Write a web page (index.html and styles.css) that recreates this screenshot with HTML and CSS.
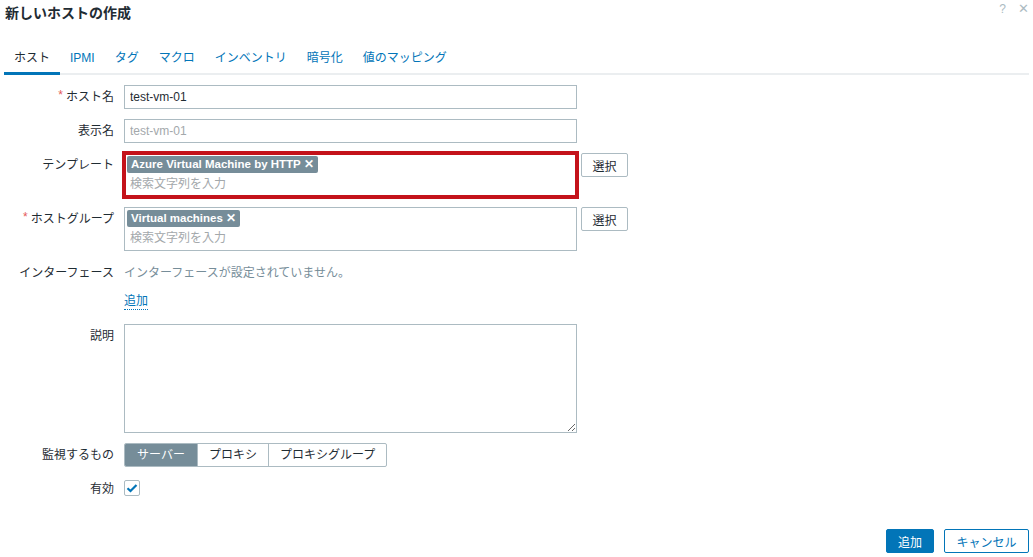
FILE: index.html
```html
<!DOCTYPE html>
<html lang="ja">
<head>
    <meta charset="UTF-8">
    <title>新しいホストの作成</title>
    <link rel="stylesheet" href="styles.css">
</head>
<body>
    <div class="dialog">
        <div class="dialog-head">
            <h4>新しいホストの作成</h4>
            <div class="head-controls">
                <span class="help">?</span>
                <span class="close">✕</span>
            </div>
        </div>

        <ul class="tabs">
            <li class="active">ホスト</li>
            <li>IPMI</li>
            <li>タグ</li>
            <li>マクロ</li>
            <li>インベントリ</li>
            <li>暗号化</li>
            <li>値のマッピング</li>
        </ul>

        <div class="form">
            <div class="row">
                <label class="required">ホスト名</label>
                <div class="field"><input type="text" class="text-input" value="test-vm-01"></div>
            </div>
            <div class="row">
                <label>表示名</label>
                <div class="field"><input type="text" class="text-input" placeholder="test-vm-01"></div>
            </div>
            <div class="row">
                <label>テンプレート</label>
                <div class="field">
                    <div class="multiselect highlighted">
                        <span class="tag">Azure Virtual Machine by HTTP <b>✕</b></span>
                        <span class="placeholder">検索文字列を入力</span>
                    </div>
                    <button type="button" class="btn-alt">選択</button>
                </div>
            </div>
            <div class="row">
                <label class="required">ホストグループ</label>
                <div class="field">
                    <div class="multiselect">
                        <span class="tag">Virtual machines <b>✕</b></span>
                        <span class="placeholder">検索文字列を入力</span>
                    </div>
                    <button type="button" class="btn-alt">選択</button>
                </div>
            </div>
            <div class="row row-text">
                <label>インターフェース</label>
                <div class="field muted">インターフェースが設定されていません。</div>
            </div>
            <div class="row row-link">
                <label></label>
                <div class="field"><a href="#" class="link">追加</a></div>
            </div>
            <div class="row">
                <label>説明</label>
                <div class="field"><textarea class="textarea"></textarea></div>
            </div>
            <div class="row">
                <label>監視するもの</label>
                <div class="field">
                    <div class="segmented">
                        <span class="on">サーバー</span>
                        <span>プロキシ</span>
                        <span>プロキシグループ</span>
                    </div>
                </div>
            </div>
            <div class="row">
                <label>有効</label>
                <div class="field">
                    <span class="checkbox">
                        <svg width="12" height="10" viewBox="0 0 12 10"><path d="M1.5 5.2 L4.5 8 L10.5 2" fill="none" stroke="#0275b8" stroke-width="2.2"/></svg>
                    </span>
                </div>
            </div>
        </div>

        <div class="dialog-foot">
            <button type="button" class="btn-main">追加</button>
            <button type="button" class="btn-cancel">キャンセル</button>
        </div>
    </div>
</body>
</html>
```

FILE: styles.css
```css
*{
    margin: 0;
    padding: 0;
    box-sizing: border-box;
}
body{
    background-color: #fff;
    color: #1f2c33;
    font-family: "Liberation Sans", Arial, "Noto Sans CJK JP", sans-serif;
    font-size: 12px;
}

.dialog{
    width: 1033px;
    height: 557px;
    position: relative;
}

.dialog-head{
    display: flex;
    justify-content: space-between;
    padding: 4px 4px 0 5px;
    height: 44px;
}
.dialog-head h4{
    font-size: 14px;
    font-weight: bold;
    line-height: 18px;
    color: #1f2c33;
}
.head-controls{
    display: flex;
    gap: 12px;
    color: #acbbc2;
    font-size: 12px;
    line-height: 12px;
    margin-top: -1px;
}
.head-controls .close{
    font-size: 13px;
}

.tabs{
    list-style: none;
    display: flex;
    margin: 0 0 0 4px;
    border-bottom: 2px solid #ebeef0;
    height: 31px;
    width: 1025px;
}
.tabs li{
    padding: 7px 10px 0;
    color: #0275b8;
    line-height: 14px;
    cursor: pointer;
}
.tabs li.active{
    color: #1f2c33;
    border-bottom: 3px solid #0275b8;
    margin-bottom: -2px;
}

.form{
    padding-top: 10px;
    display: flex;
    flex-direction: column;
    gap: 10px;
}
.row{
    display: flex;
    gap: 10px;
}
.row label{
    width: 114px;
    height: 24px;
    text-align: right;
    line-height: 22px;
    padding-top: 1px;
    flex-shrink: 0;
    white-space: nowrap;
}
.row label.required::before{
    content: "*";
    color: #e45959;
    margin-right: 3px;
    vertical-align: top;
    line-height: 18px;
}
.field{
    display: flex;
    align-items: flex-start;
    gap: 4px;
}
.text-input{
    width: 453px;
    height: 24px;
    border: 1px solid #acbbc2;
    padding: 0 5px;
    font: inherit;
    color: #1f2c33;
    outline: none;
}
.text-input::placeholder{
    color: #a3a8ab;
}

.multiselect{
    width: 453px;
    height: 44px;
    border: 1px solid #acbbc2;
    padding: 2px 2px;
    display: flex;
    flex-direction: column;
    align-items: flex-start;
    gap: 4px;
}
.multiselect.highlighted{
    border: 2px solid #c4121a;
    outline: 2px solid #c4121a;
    padding: 1px 1px;
}
.tag{
    background-color: #768d99;
    color: #fff;
    border-radius: 2px;
    padding: 0 4px;
    line-height: 17px;
    height: 17px;
    font-size: 11.5px;
    font-weight: bold;
    white-space: nowrap;
}
.placeholder{
    color: #a3a8ab;
    padding-left: 3px;
    line-height: 15px;
}

.btn-alt{
    width: 47px;
    height: 24px;
    background: #fff;
    border: 1px solid #acbbc2;
    border-radius: 2px;
    font: inherit;
    color: #1f2c33;
}

.row-text .field{
    height: 24px;
    line-height: 22px;
    padding-top: 1px;
}
.muted{
    color: #768d99;
}
.row-link{
    margin-top: -9px;
}
.row-link .field{
    height: 28px;
    line-height: 18px;
    padding-top: 6px;
}
.link{
    color: #0275b8;
    text-decoration: none;
    border-bottom: 1px dotted #0275b8;
    height: 18px;
}

.textarea{
    width: 453px;
    height: 109px;
    border: 1px solid #acbbc2;
    resize: both;
    font: inherit;
    outline: none;
}

.segmented{
    display: flex;
    height: 24px;
    border: 1px solid #acbbc2;
    border-radius: 2px;
    overflow: hidden;
}
.segmented span{
    padding: 0 11px;
    line-height: 22px;
    border-left: 1px solid #acbbc2;
    color: #1f2c33;
    white-space: nowrap;
}
.segmented span:first-child{
    border-left: none;
}
.segmented span.on{
    background-color: #768d99;
    color: #fff;
    padding: 0 12px;
}

.checkbox{
    width: 16px;
    height: 16px;
    margin-top: 3px;
    border: 1px solid #acbbc2;
    border-radius: 2px;
    display: flex;
    align-items: center;
    justify-content: center;
}

.dialog-foot{
    position: absolute;
    right: 4px;
    bottom: 4px;
    display: flex;
    gap: 10px;
}
.btn-main,
.btn-cancel{
    height: 24px;
    border-radius: 2px;
    font: inherit;
    font-size: 12px;
    padding: 0;
    white-space: nowrap;
    text-align: center;
}
.btn-main{
    width: 48px;
    background-color: #0275b8;
    border: 1px solid #0275b8;
    color: #fff;
}
.btn-cancel{
    width: 85px;
    background-color: #fff;
    border: 1px solid #0275b8;
    color: #0275b8;
}
```
